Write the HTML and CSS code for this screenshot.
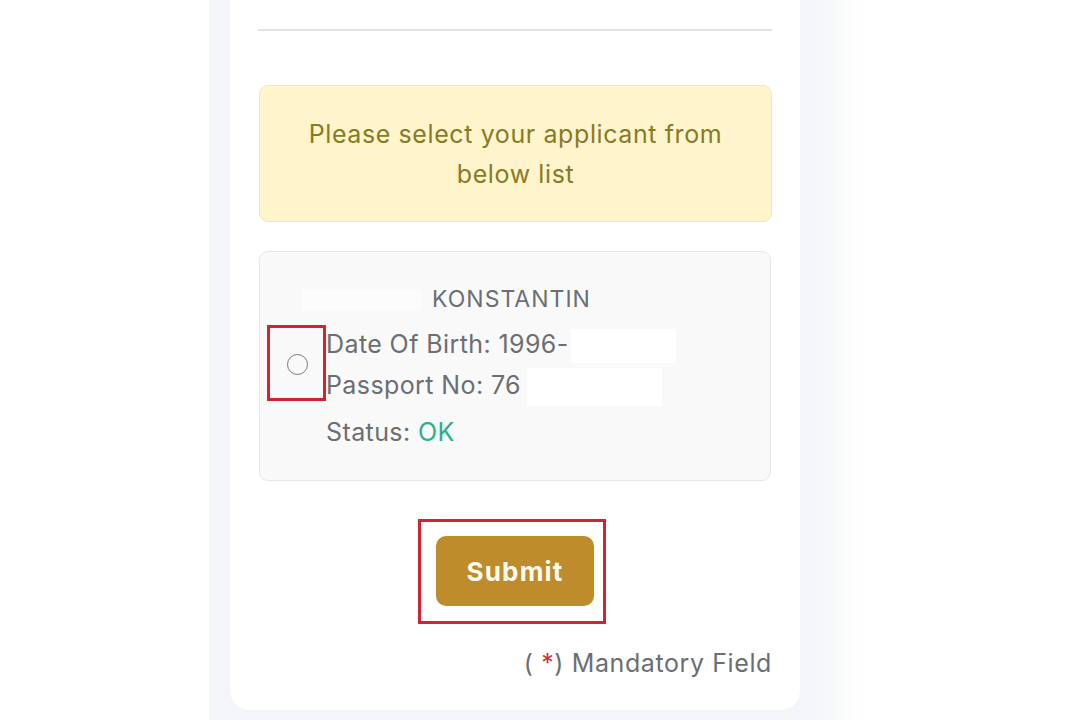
FILE: index.html
```html
<!DOCTYPE html>
<html lang="en">
<head>
<meta charset="utf-8">
<title>Select applicant</title>
<link rel="stylesheet" href="styles.css">
</head>
<body>
<div class="page">
  <div class="shell">
    <div class="card">
      <hr class="divider">
      <div class="alert">Please select your applicant from<br>below list</div>
      <div class="applicant">
        <div class="name"><span class="mask mask-name"></span>KONSTANTIN</div>
        <div class="select-row">
          <div class="radio-box"><span class="radio"></span></div>
          <div class="details">
            <div class="line">Date Of Birth: 1996-<span class="mask mask-dob"></span></div>
            <div class="line">Passport No: 76<span class="mask mask-pass"></span></div>
          </div>
        </div>
        <div class="status">Status: <span class="ok">OK</span></div>
      </div>
      <div class="submit-wrap">
        <div class="submit-box"><button class="submit" type="button">Submit</button></div>
      </div>
      <div class="mandatory">( <span class="star">*</span>) Mandatory Field</div>
    </div>
  </div>
</div>
</body>
</html>
```

FILE: styles.css
```css
* { box-sizing: border-box; }
html, body { margin: 0; padding: 0; }
body {
  background: #ffffff;
  font-family: Inter, "Noto Sans", "Liberation Sans", sans-serif;
  width: 1080px;
  height: 720px;
  overflow: hidden;
}
.page {
  display: flex;
  padding-left: 209px;
  height: 720px;
}
.shell {
  width: 660px;
  height: 720px;
  padding-left: 21px;
  background: linear-gradient(to right, #f4f5f8 0px, #f4f5f8 600px, #f8f9fa 625px, #ffffff 655px);
}
.card {
  width: 570px;
  background: #ffffff;
  border-radius: 0 0 20px 20px;
  padding: 29px 28px 32px 28px;
}
.divider {
  margin: 0;
  border: 0;
  height: 2px;
  background: #e3e3e5;
}
.alert {
  margin-top: 54px;
  margin-left: 1px;
  background: #fff4cc;
  border: 1px solid #f6e7ab;
  border-radius: 9px;
  padding: 28px 10px 27px;
  text-align: center;
  color: #8a7925;
  font-size: 25px;
  letter-spacing: 0.6px;
  line-height: 40px;
}
.applicant {
  margin-top: 29px;
  margin-left: 1px;
  margin-right: 1px;
  background: #f9f9fa;
  border: 1px solid #e6e7e9;
  border-radius: 9px;
  padding: 32px 24px 27px 7px;
  color: #6b6e72;
  font-size: 25px;
  letter-spacing: 0.4px;
}
.name {
  position: relative;
  text-align: center;
  line-height: 30px;
  margin-bottom: 10px;
  padding-left: 10px;
  font-size: 23px;
  letter-spacing: 1px;
}
.mask {
  display: inline-block;
  background: #ffffff;
  vertical-align: middle;
}
.mask-name {
  position: absolute;
  left: 34px;
  top: 6px;
  width: 120px;
  height: 20px;
  opacity: 0.55;
}
.select-row {
  display: flex;
  align-items: center;
}
.radio-box {
  width: 59px;
  height: 76px;
  border: 3px solid #d3232f;
  display: flex;
  align-items: center;
  justify-content: center;
  margin-top: -4px;
}
.radio {
  width: 21px;
  height: 21px;
  border: 1.6px solid #76787b;
  border-radius: 50%;
  margin-left: 2px;
  margin-top: 2px;
}
.details .line {
  line-height: 41px;
  white-space: nowrap;
}
.mask-dob {
  width: 105px;
  height: 34px;
  margin-left: 2px;
}
.mask-pass {
  width: 135px;
  height: 38px;
  margin-left: 6px;
}
.status {
  margin-left: 59px;
  margin-top: 6px;
  line-height: 41px;
}
.ok { color: #2ab187; }
.submit-wrap {
  display: flex;
  justify-content: center;
  margin-top: 38px;
}
.submit-box {
  border: 3px solid #d3232f;
  padding: 14px 9px 15px 15px;
  margin-right: 6px;
}
.submit {
  display: block;
  width: 158px;
  height: 70px;
  border: 0;
  border-radius: 10px;
  background: #be8c2b;
  color: #fffaf0;
  font-family: Inter, "Noto Sans", "Liberation Sans", sans-serif;
  font-weight: 700;
  font-size: 26px;
  letter-spacing: 1.2px;
}
.mandatory {
  margin-top: 24px;
  text-align: right;
  line-height: 30px;
  font-size: 25px;
  letter-spacing: 0.6px;
  color: #6b6e72;
}
.star { color: #d0303d; }
```
